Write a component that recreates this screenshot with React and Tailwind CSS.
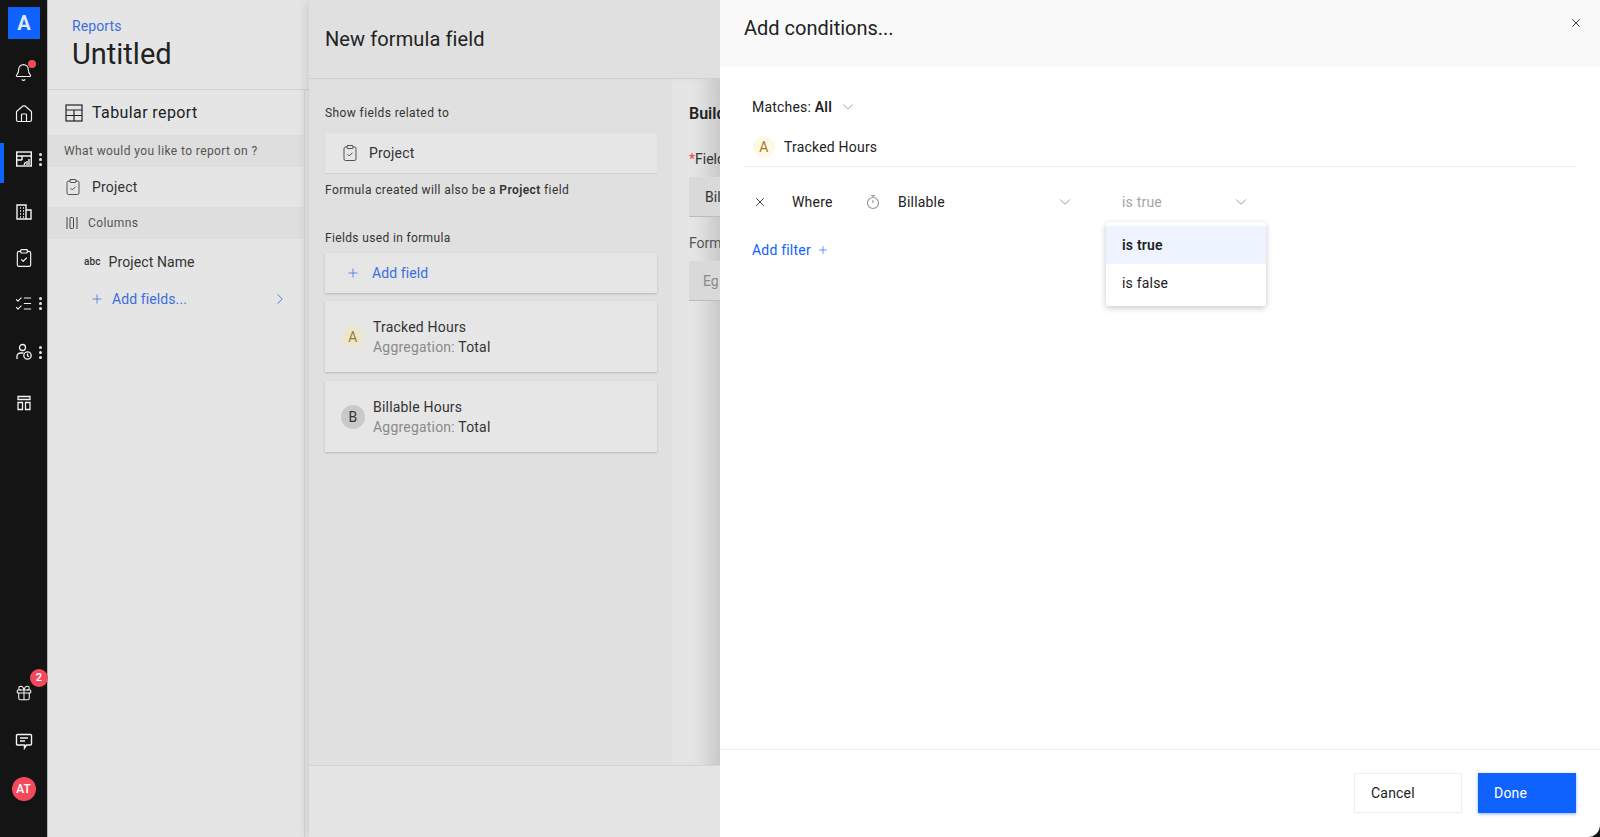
import { Bell, House, ClipboardCheck, ListChecks, X, ChevronDown, ChevronRight, Plus, Gift } from "lucide-react";

const font = { fontFamily: '"Roboto", "Noto Sans", sans-serif' };

function ReportIcon() {
  return (
    <svg width="18" height="18" viewBox="0 0 18 18" fill="none" stroke="currentColor" strokeWidth="1.4">
      <rect x="1.7" y="2" width="14.6" height="14" />
      <path d="M1.7 6h14.6M7 6v4M1.7 10H7M12 11v4M14 9v6M9 15l1.500-3" />
    </svg>
  );
}

function TableIcon() {
  return (
    <svg width="18" height="18" viewBox="0 0 18 18" fill="none" stroke="currentColor" strokeWidth="1.2">
      <rect x="1" y="1" width="16" height="16" />
      <path d="M1 6h16M1 11.500h16M9 6v11" />
    </svg>
  );
}

function BuildingIcon() {
  return (
    <svg width="18" height="18" viewBox="0 0 18 18" fill="none" stroke="currentColor" strokeWidth="1.4">
      <path d="M2 16V2h9v14zM11 7h5v9h-5" />
      <path d="M5 5h1M8 5h1M5 8h1M8 8h1M5 11h1M8 11h1M5 14h1M8 14h1" strokeWidth="1.500" />
    </svg>
  );
}

function PersonClockIcon() {
  return (
    <svg width="18" height="18" viewBox="0 0 18 18" fill="none" stroke="currentColor" strokeWidth="1.3">
      <circle cx="7.500" cy="4.500" r="3" />
      <path d="M2 16v-2.500A3.500 3.500 0 0 1 5.500 10h3" />
      <circle cx="12.500" cy="12.500" r="3.700" />
      <path d="M12.500 10.500v2.200l1.500 1" />
    </svg>
  );
}

function LayoutIcon() {
  return (
    <svg width="18" height="18" viewBox="0 0 18 18" fill="none" stroke="currentColor" strokeWidth="1.3">
      <path d="M3 2.500h12v3H3zM3 8.500h4.500v7H3zM10.500 8.500H15v7h-4.500z" />
    </svg>
  );
}

function ChatIcon() {
  return (
    <svg width="18" height="18" viewBox="0 0 18 18" fill="none" stroke="currentColor" strokeWidth="1.400">
      <path d="M2.500 2.500h13a1 1 0 0 1 1 1v8.500a1 1 0 0 1-1 1h-4l-2 3v-3h-7a1 1 0 0 1-1-1V3.500a1 1 0 0 1 1-1z" />
      <path d="M5 6h8M5 9h5" />
    </svg>
  );
}

function ColumnsIcon() {
  return (
    <svg width="12" height="14" viewBox="0 0 12 14" fill="none" stroke="#444" strokeWidth="1">
      <path d="M1 1v12M11 1v12" />
      <rect x="4" y="1.500" width="3.500" height="11" rx="1" />
    </svg>
  );
}

// stopwatch next to the "Billable" field
function StopwatchIcon() {
  return (
    <svg width="16" height="16" viewBox="0 0 16 16" fill="none" stroke="#999" strokeWidth="1.2">
      <circle cx="8" cy="9" r="5.500" />
      <path d="M6 1.500h4M8 1.500v2M8 6v3" />
    </svg>
  );
}

function Dots() {
  return (
    <div className="flex flex-col gap-[2px]">
      <span className="w-[3px] h-[3px] rounded-full bg-gray-200" />
      <span className="w-[3px] h-[3px] rounded-full bg-gray-200" />
      <span className="w-[3px] h-[3px] rounded-full bg-gray-200" />
    </div>
  );
}

function NavItem({ children, top, dots, active, badge }) {
  return (
    <div className="relative h-6 w-full flex items-center justify-center text-gray-100" style={{ marginTop: top }}>
      {active && <span className="absolute left-0 top-[-4px] w-1 h-10 bg-[#0f62fe]" />}
      {children}
      {dots && <div className="absolute left-[39px] top-[6px]"><Dots /></div>}
      {badge}
    </div>
  );
}

function Sidebar() {
  return (
    <div className="w-[48px] shrink-0 h-full bg-[#141414] flex flex-col items-center border-r border-[#b5b5b5]">
      <div className="mt-[7px] ml-[1px] w-8 h-8 bg-[#0f62fe] flex items-center justify-center text-[#dfe8ff] font-bold text-xl">A</div>
      <NavItem top={21} badge={<span className="absolute left-[28px] top-0 w-2 h-2 rounded-full bg-[#f2495c]" />}>
        <Bell size={19} strokeWidth={1.4} />
      </NavItem>
      <NavItem top={18}><House size={20} strokeWidth={1.4} /></NavItem>
      <NavItem top={21} dots active><ReportIcon /></NavItem>
      <NavItem top={29}><BuildingIcon /></NavItem>
      <NavItem top={22}><ClipboardCheck size={20} strokeWidth={1.4} /></NavItem>
      <NavItem top={21} dots><ListChecks size={19} strokeWidth={1.4} /></NavItem>
      <NavItem top={25} dots><PersonClockIcon /></NavItem>
      <NavItem top={27}><LayoutIcon /></NavItem>
      <div className="flex-1" />
      <NavItem badge={<span className="absolute left-[30px] top-[-12px] w-[18px] h-[18px] rounded-full bg-[#f2495c] text-white text-[11px] font-semibold flex items-center justify-center">2</span>}>
        <Gift size={18} strokeWidth={1.4} />
      </NavItem>
      <NavItem top={24}><ChatIcon /></NavItem>
      <div className="mt-[24px] mb-[36px] w-6 h-6 rounded-full bg-[#f2495c] text-white text-xs font-medium flex items-center justify-center">AT</div>
    </div>
  );
}

function ReportPanel() {
  return (
    <div className="w-[261px] shrink-0 h-full bg-[#e5e5e5] flex">
      <div className="w-[257px] h-full flex flex-col border-r border-[#d4d4d4]">
        <div className="h-[90px] border-b border-[#d2d2d2] pl-[24px] pt-4 -mr-[5px] bg-[#e5e5e5]">
          <div className="text-sm leading-5 text-[#3b6fe0] tracking-[0.1px]">Reports</div>
          <div className="text-[29px] leading-9 text-[#222]">Untitled</div>
        </div>
        <div className="h-[45px] flex items-center pl-[17px] gap-[9px] text-[#222]">
          <TableIcon />
          <span className="text-base tracking-[0.4px]">Tabular report</span>
        </div>
        <div className="h-8 bg-[#dedede] flex items-center pl-[16px] text-xs tracking-[0.4px] text-[#555]">What would you like to report on ?</div>
        <div className="h-[40px] flex items-center pl-[16px] gap-[10px] text-sm text-[#333] tracking-[0.2px]">
          <ClipboardCheck size={18} strokeWidth={1.1} />
          <span>Project</span>
        </div>
        <div className="h-8 bg-[#dedede] flex items-center pl-[18px] gap-[10px] text-xs text-[#555] tracking-[0.4px]">
          <ColumnsIcon />
          <span>Columns</span>
        </div>
        <div className="h-[46px] flex items-center pl-[36px] gap-[8px] text-sm text-[#333] tracking-[0.1px]">
          <span className="text-[10px] leading-none font-medium">abc</span>
          <span>Project Name</span>
        </div>
        <div className="h-[28px] flex items-center pl-[42px] pr-[15px] text-sm text-[#3b6fe0] tracking-[0.1px]">
          <Plus size={14} strokeWidth={1.3} />
          <span className="ml-[8px] flex-1">Add fields...</span>
          <ChevronRight size={18} strokeWidth={1.2} />
        </div>
      </div>
    </div>
  );
}

function FieldCard({ letter, name, circle, color }) {
  return (
    <div className="h-[71px] bg-[#e6e6e6] shadow-[0_1px_2px_rgba(0,0,0,0.18)] flex items-center pl-4 gap-[8px] tracking-[0.2px]">
      <span className={`w-6 h-6 rounded-full ${circle} ${color} flex items-center justify-center text-sm`}>{letter}</span>
      <div className="text-sm leading-5">
        <div className="text-[#333]">{name}</div>
        <div className="text-[#8a8a8a]">Aggregation: <span className="text-[#333]">Total</span></div>
      </div>
    </div>
  );
}

function FormulaPanel() {
  return (
    <div className="relative z-10 w-[411px] shrink-0 h-full bg-[#e0e0e0] flex flex-col shadow-[-3px_0_10px_rgba(0,0,0,0.1)]">
      <div className="h-[79px] shrink-0 border-b border-[#cfcfcf] pl-4 pt-[25px] text-xl leading-7 text-[#222] tracking-[0.1px]">New formula field</div>
      <div className="flex-1 flex min-h-0">
        <div className="w-[363px] shrink-0 pl-4 pr-[15px] pt-[24px] text-[#333]">
          <div className="text-xs leading-5 tracking-[0.4px]">Show fields related to</div>
          <div className="mt-[10px] h-10 bg-[#e6e6e6] shadow-[0_1px_1px_rgba(0,0,0,0.06)] flex items-center pl-[16px] gap-[10px] text-sm tracking-[0.2px]">
            <ClipboardCheck size={18} strokeWidth={1.1} />
            <span>Project</span>
          </div>
          <div className="mt-[7px] text-xs leading-5 tracking-[0.4px]">Formula created will also be a <b className="font-semibold">Project</b> field</div>
          <div className="mt-[28px] text-xs leading-5 tracking-[0.35px]">Fields used in formula</div>
          <div className="mt-[5px] h-10 bg-[#e6e6e6] shadow-[0_1px_2px_rgba(0,0,0,0.18)] flex items-center pl-[21px] gap-[12px] text-sm text-[#3b6fe0] tracking-[0.1px]">
            <Plus size={14} strokeWidth={1.3} />
            <span>Add field</span>
          </div>
          <div className="mt-[8px] flex flex-col gap-[9px]">
            <FieldCard letter="A" name="Tracked Hours" circle="bg-[#ebe6d3]" color="text-[#a07c12]" />
            <FieldCard letter="B" name="Billable Hours" circle="bg-[#c9c9c9]" color="text-[#333]" />
          </div>
        </div>
        <div className="flex-1 bg-[#e5e5e5] pl-[17px] text-[#333] overflow-hidden whitespace-nowrap shadow-[inset_-22px_0_20px_-12px_rgba(0,0,0,0.14)]">
          <div className="mt-[25px] text-base font-semibold text-[#222] leading-5">Build</div>
          <div className="mt-[25px] text-sm leading-5"><span className="text-[#e5484d]">*</span>Field</div>
          <div className="mt-[8px] h-10 bg-[#d9d9d9] border-b border-[#bbb] flex items-center pl-4 text-sm">Billable</div>
          <div className="mt-[16px] text-sm leading-5 text-[#555]">Formula</div>
          <div className="mt-[8px] h-10 bg-[#d9d9d9] border-b border-[#bbb] flex items-center pl-[14px] text-sm text-[#8a8a8a]">Eg</div>
        </div>
      </div>
      <div className="h-[72px] shrink-0 bg-[#e5e5e5] border-t border-[#d4d4d4]" />
    </div>
  );
}

function ConditionsPanel() {
  return (
    <div className="relative z-20 flex-1 h-full bg-white rounded-br-xl flex flex-col text-[#222] overflow-hidden tracking-[0.2px]">
      <div className="h-[67px] shrink-0 bg-[#f9f9f9] flex items-start justify-between pl-6 pr-[17px]">
        <div className="mt-[14px] text-xl leading-7 tracking-normal">Add conditions...</div>
        <X size={14} strokeWidth={1.5} className="mt-[16px]" />
      </div>
      <div className="flex-1 pl-[23px] pr-[23px] relative">
        <div className="mt-[30px] pl-[9px] flex items-center h-5 text-sm">
          <span>Matches: <b className="font-semibold">All</b></span>
          <ChevronDown size={18} strokeWidth={1.1} className="ml-[7px] text-[#888]" />
        </div>
        <div className="mt-[19px] h-[31px] pl-[10px] flex items-start gap-[9px] border-b border-[#eeeeee] text-sm leading-[22px]">
          <span className="w-[22px] h-[22px] rounded-full bg-[#fdf8e8] text-[#a97e10] flex items-center justify-center text-sm">A</span>
          <span>Tracked Hours</span>
        </div>
        <div className="mt-[23px] h-6 pl-[10px] flex items-center text-sm">
          <X size={14} strokeWidth={1.5} />
          <span className="ml-[25px] w-[73px]">Where</span>
          <StopwatchIcon />
          <span className="ml-[17px] w-[158px]">Billable</span>
          <ChevronDown size={18} strokeWidth={1.1} className="text-[#888]" />
          <span className="ml-[48px] w-[110px] text-[#a6a6a6]">is true</span>
          <ChevronDown size={18} strokeWidth={1.1} className="text-[#888]" />
        </div>
        <div className="mt-[26px] pl-[9px] flex items-center h-5 gap-[6px] text-sm text-[#0f62fe]">
          <span>Add filter</span>
          <Plus size={12} strokeWidth={1.3} />
        </div>
        <div className="absolute left-[386px] top-[155px] w-40 h-[84px] bg-white rounded-[3px] shadow-[0_2px_6px_rgba(0,0,0,0.22)] py-1 text-sm">
          <div className="h-[38px] bg-[#edf4ff] flex items-center pl-4 font-semibold">is true</div>
          <div className="h-[38px] flex items-center pl-4">is false</div>
        </div>
      </div>
      <div className="h-[88px] shrink-0 border-t border-[#eeeeee] flex justify-end gap-4 pt-[23px] pr-6 text-sm">
        <div className="w-[108px] h-10 border border-[#eeeeee] flex items-center pl-[16px]">Cancel</div>
        <div className="w-[98px] h-10 bg-[#0f62fe] text-white flex items-center pl-[16px] shadow-[0_1px_3px_rgba(15,98,254,0.5)]">Done</div>
      </div>
    </div>
  );
}

export default function App() {
  return (
    <div className="w-[1600px] h-[837px] flex bg-[#141414] overflow-hidden" style={font}>
      <Sidebar />
      <ReportPanel />
      <FormulaPanel />
      <ConditionsPanel />
    </div>
  );
}
